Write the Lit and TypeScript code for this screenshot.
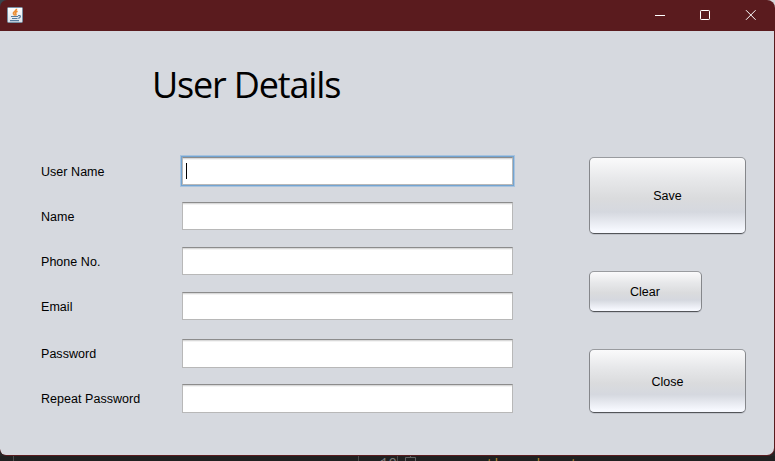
import { LitElement, html, css, svg } from "lit";
import { customElement } from "lit/decorators.js";

const fields = [
  { label: "User Name", cls: "user" },
  { label: "Name", cls: "" },
  { label: "Phone No.", cls: "" },
  { label: "Email", cls: "" },
  { label: "Password", cls: "tall first" },
  { label: "Repeat Password", cls: "tall" },
];

const javaIcon = svg`
  <defs><linearGradient id="tile" x1="0" y1="0" x2="0" y2="1">
    <stop offset="0" stop-color="#ffffff"/><stop offset="1" stop-color="#dce3ea"/>
  </linearGradient></defs>
  <rect x=".5" y=".5" width="15" height="15" rx="1" fill="url(#tile)" stroke="#7890a4"/>
  <path d="M9.6 1.8C9.8 4 5.8 4.6 6.4 6.4C6.7 7.2 7.5 7.8 7.6 8.7M10.6 4.3C8.2 5 8 6 8.9 6.9C9.3 7.5 8.7 8.2 8.4 8.6" fill="none" stroke="#ec8f35" stroke-width="1.6"/>
  <path d="M4 9.5H11M5 11.5H10.5M3 13.6H12M11 8.7C14.2 7.8 14 10.6 11.3 11.4" fill="none" stroke="#557b9d" stroke-width="1.2"/>`;

@customElement("app-root")
export class AppRoot extends LitElement {
  static styles = css`
    :host { display: block; position: relative; width: 775px; height: 461px; overflow: hidden;
      background: #252526; color: #000; font: 12px/16px "Liberation Sans", Arial, sans-serif; }
    .editor { position: absolute; left: 0; top: 456px; width: 775px; height: 5px; overflow: hidden;
      background: #202020; font: 14px/16px "Liberation Mono", monospace; white-space: pre; }
    .editor svg { display: block; }
    .code { fill: #ac8432; }
    .num { fill: #777; }
    .corner { position: absolute; right: 0; top: 0; width: 8px; height: 8px; background: #d5d5d8; }
    .corner.left { left: 0; right: auto; background: #39444c; }
    .window { position: relative; box-sizing: border-box; width: 775px; height: 456px; display: flex;
      flex-direction: column; background: #5a1b1e; border-radius: 7px 8px 8px 7px; overflow: hidden; padding: 0 1px 1px 0; }
    .bar { height: 31px; flex: none; display: flex; align-items: center; padding-left: 7px; box-sizing: border-box; }
    .bar svg { display: block; flex: none; }
    .logo { margin-top: -1px; }
    .controls { margin-left: auto; }
    .client { flex: 1; display: flex; flex-direction: column; background: #d6d9df; border-radius: 0 0 7px 6px; }
    h1 { margin: 27px 0 0 152px; height: 53px; font: 400 36px/54px "Open Sans", "Noto Sans", sans-serif;
      letter-spacing: -1.17px; white-space: nowrap; }
    .body { display: flex; margin: 46px 0 0 41px; }
    .form { width: 472px; }
    .row { display: flex; align-items: center; height: 28px; margin-bottom: 17px; }
    .row.tall { height: 29px; margin-bottom: 16px; }
    .row.first { margin-top: 19px; }
    .label { width: 141px; flex: none; white-space: nowrap; padding-top: 2px; box-sizing: border-box; font-size: 12.5px; letter-spacing: 0.04px; }
    .tall .label { padding-top: 0; }
    .input { box-sizing: border-box; width: 331px; height: 100%; background: #fff; border: 1px solid #b8b8b8;
      border-top-color: #8c8c8c; box-shadow: inset 0 1px #d9d9d9, inset 0 2px #f3f3f3; padding: 5px 3px; }
    .user .input { box-shadow: 0 0 0 1px #73a4d1, 0 0 0 2px #a8c3de, inset 0 1px #d9d9d9, inset 0 2px #f3f3f3; }
    .caret { width: 1px; height: 16px; background: #000; }
    .actions { margin-left: 76px; display: flex; flex-direction: column; align-items: flex-start; }
    button { box-sizing: border-box; width: 157px; height: 77px; padding: 0; margin: 0; border: 1px solid #85878b;
      border-top-color: #999b9f; border-bottom-color: #535559; border-radius: 5px; color: #000;
      font: 12.5px/16px "Liberation Sans", Arial, sans-serif; box-shadow: 0 1px #c1c4cb;
      background: linear-gradient(#fafafb 0%, #e7e8ea 28%, #dadbdd 54%, #d5d8df 72%, #f7f9ff 97%); }
    .clear { width: 113px; height: 41px; margin-top: 37px; padding-right: 1px; }
    .close { height: 64px; margin-top: 37px; padding-top: 2px; }
  `;

  render() {
    return html`
      <div class="corner left"></div><div class="corner"></div>
      <div class="editor"><svg width="775" height="5">
        <path d="M13.5 0V5" stroke="#4a4a4a"/><path d="M358.5 0V5M397.5 0V5" stroke="#4a4a4a"/>
        <path d="M405.5 5V1.5H415.5V5M410.5 0V1" fill="none" stroke="#626262"/>
        <text class="num" x="380" y="12">10</text>
        <text class="code" x="486" y="13" xml:space="preserve">the   b   t</text>
      </svg></div>
      <div class="window">
        <header class="bar">
          <svg class="logo" width="16" height="16">${javaIcon}</svg>
          <svg class="controls" width="138" height="31" fill="none" stroke="#fff">
            <path d="M19 15.5H29"/><rect x="64.5" y="10.5" width="9" height="9" rx=".7"/>
            <path d="M110 10.2L119.6 19.8M119.6 10.2L110 19.8"/>
          </svg>
        </header>
        <main class="client">
          <h1>User Details</h1>
          <div class="body">
            <div class="form">
              ${fields.map((f) => html`<div class="row ${f.cls}">
                <span class="label">${f.label}</span>
                <div class="input">${f.cls === "user" ? html`<div class="caret"></div>` : ""}</div>
              </div>`)}
            </div>
            <div class="actions">
              <button>Save</button><button class="clear">Clear</button><button class="close">Close</button>
            </div>
          </div>
        </main>
      </div>`;
  }
}
